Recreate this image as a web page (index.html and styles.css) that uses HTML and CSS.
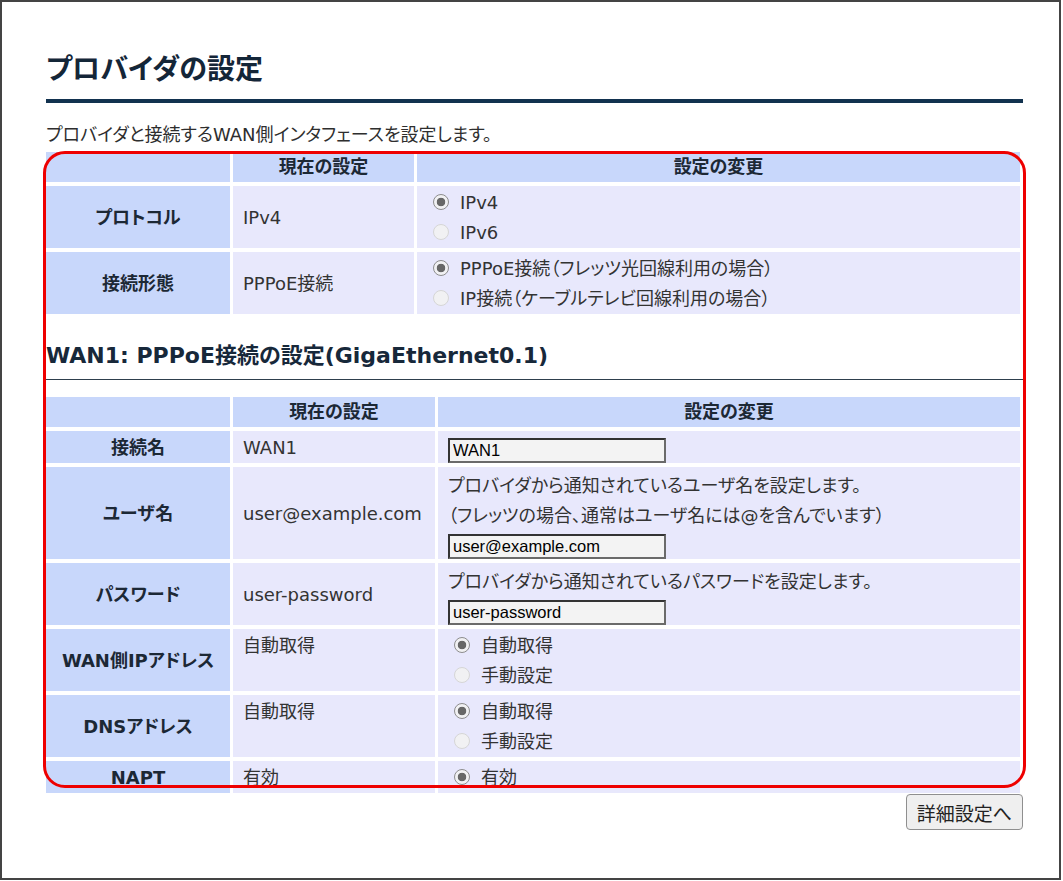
FILE: index.html
```html
<!DOCTYPE html>
<html lang="ja">
<head>
<meta charset="utf-8">
<title>プロバイダの設定</title>
<link rel="stylesheet" href="styles.css">
</head>
<body>
<div class="frame">
  <div class="page">
    <h1 class="title">プロバイダの設定</h1>
    <p class="desc">プロバイダと接続するWAN側インタフェースを設定します。</p>

    <table class="grid grid-a">
      <tr>
        <th class="c1"></th>
        <th class="c2a">現在の設定</th>
        <th>設定の変更</th>
      </tr>
      <tr>
        <th class="label">プロトコル</th>
        <td class="cur">IPv4</td>
        <td class="chg">
          <label class="opt"><input type="radio" name="proto" checked>IPv4</label>
          <label class="opt"><input type="radio" name="proto">IPv6</label>
        </td>
      </tr>
      <tr>
        <th class="label">接続形態</th>
        <td class="cur">PPPoE接続</td>
        <td class="chg">
          <label class="opt"><input type="radio" name="type" checked>PPPoE接続（フレッツ光回線利用の場合）</label>
          <label class="opt"><input type="radio" name="type">IP接続（ケーブルテレビ回線利用の場合）</label>
        </td>
      </tr>
    </table>

    <h2 class="section">WAN1: PPPoE接続の設定(GigaEthernet0.1)</h2>

    <div class="clip">
      <table class="grid grid-b">
        <tr>
          <th class="c1"></th>
          <th class="c2b">現在の設定</th>
          <th>設定の変更</th>
        </tr>
        <tr>
          <th class="label">接続名</th>
          <td class="cur">WAN1</td>
          <td class="chg field"><input class="text" type="text" value="WAN1"></td>
        </tr>
        <tr>
          <th class="label">ユーザ名</th>
          <td class="cur">user@example.com</td>
          <td class="chg field">
            <div class="note">プロバイダから通知されているユーザ名を設定します。</div>
            <div class="note">（フレッツの場合、通常はユーザ名には@を含んでいます）</div>
            <input class="text" type="text" value="user@example.com">
          </td>
        </tr>
        <tr>
          <th class="label">パスワード</th>
          <td class="cur">user-password</td>
          <td class="chg field">
            <div class="note">プロバイダから通知されているパスワードを設定します。</div>
            <input class="text" type="text" value="user-password">
          </td>
        </tr>
        <tr>
          <th class="label">WAN側IPアドレス</th>
          <td class="cur top">自動取得</td>
          <td class="chg">
            <label class="opt"><input type="radio" name="wanip" checked>自動取得</label>
            <label class="opt"><input type="radio" name="wanip">手動設定</label>
          </td>
        </tr>
        <tr>
          <th class="label">DNSアドレス</th>
          <td class="cur top">自動取得</td>
          <td class="chg">
            <label class="opt"><input type="radio" name="dns" checked>自動取得</label>
            <label class="opt"><input type="radio" name="dns">手動設定</label>
          </td>
        </tr>
        <tr>
          <th class="label">NAPT</th>
          <td class="cur top">有効</td>
          <td class="chg">
            <label class="opt"><input type="radio" name="napt" checked>有効</label>
          </td>
        </tr>
      </table>
    </div>

    <div class="actions">
      <button class="btn" type="button">詳細設定へ</button>
    </div>
  </div>
  <div class="highlight"></div>
</div>
</body>
</html>
```

FILE: styles.css
```css
html, body {
  margin: 0;
  padding: 0;
  background: #ffffff;
}

body {
  font-family: "DejaVu Sans", "Noto Sans CJK JP", sans-serif;
  font-size: 18px;
  font-feature-settings: "palt";
  color: #2e2e2e;
}

.frame {
  position: relative;
  box-sizing: border-box;
  width: 1061px;
  height: 880px;
  border: 2px solid #444444;
  overflow: hidden;
}

.page {
  padding: 50px 36px 0 44px;
}

.title {
  margin: 0;
  padding-bottom: 11px;
  font-size: 28px;
  line-height: 36px;
  font-weight: bold;
  color: #142638;
  border-bottom: 4px solid #12324f;
}

.desc {
  margin: 17px 0 0;
  line-height: 30px;
  color: #2e2e2e;
}

.grid {
  border-collapse: separate;
  border-spacing: 3px 4px;
  table-layout: fixed;
  width: 980px;
}

.grid-a {
  margin-top: -2px;
  margin-left: -3px;
}

.grid th,
.grid td {
  box-sizing: border-box;
  line-height: 30px;
  padding: 2px 10px 0;
}

.grid tr:first-child th {
  padding: 0 10px;
  background: #c8d7fb;
  color: #1c2835;
  font-weight: bold;
  text-align: center;
}

.c1 { width: 184px; }
.c2a { width: 181px; }
.c2b { width: 202px; }

.grid .label {
  background: #c8d7fb;
  color: #1c2835;
  font-weight: bold;
  text-align: center;
  vertical-align: middle;
  padding: 2px 4px 0;
}

.cur {
  background: #e8e8fc;
  vertical-align: middle;
  color: #333333;
}

.cur.top {
  vertical-align: top;
}

.chg {
  background: #e8e8fc;
  vertical-align: top;
  color: #333333;
}

.grid td.field {
  padding: 4px 10px 0;
}

.note {
  line-height: 30px;
}

.opt {
  display: block;
  line-height: 30px;
  white-space: nowrap;
}

.opt input {
  appearance: none;
  -webkit-appearance: none;
  box-sizing: border-box;
  width: 16px;
  height: 16px;
  margin: 0 11px 0 6px;
  border-radius: 50%;
  border: 1px solid #d6d6d6;
  background: #f1f1f3;
  vertical-align: -1px;
}

.opt input:checked {
  border-color: #8d8d8d;
  background: radial-gradient(circle, #676767 0, #676767 4px, #f1f1f3 4.6px);
}

.text {
  display: block;
  box-sizing: border-box;
  width: 218px;
  height: 25px;
  margin: 3px 0 0;
  padding: 0 3px;
  font-family: "Liberation Sans", Arial, sans-serif;
  font-size: 16.5px;
  color: #000000;
  background: #f3f3f3;
  border-style: solid;
  border-width: 2px;
  border-color: #333333 #6a6a6a #6a6a6a #333333;
  border-radius: 0;
}

.section {
  margin: 23px 0 0;
  padding-bottom: 8px;
  font-size: 22px;
  line-height: 30px;
  font-weight: bold;
  color: #17283a;
  border-bottom: 1px solid #2e3f4d;
}

.clip {
  margin: 13px 0 0 -3px;
  height: 400px;
  overflow: hidden;
}

.actions {
  display: flex;
  justify-content: flex-end;
  margin-top: 1px;
}

.btn {
  box-sizing: border-box;
  height: 36px;
  padding: 0 10px;
  font-family: "DejaVu Sans", "Noto Sans CJK JP", sans-serif;
  font-feature-settings: "palt";
  font-size: 19px;
  color: #222222;
  background: #efefef;
  border: 1px solid #8f8f8f;
  border-radius: 4px;
}

.highlight {
  position: absolute;
  left: 41px;
  top: 149px;
  width: 983px;
  height: 637px;
  box-sizing: border-box;
  border: 3px solid #ee0000;
  border-radius: 22px;
  pointer-events: none;
}
```
